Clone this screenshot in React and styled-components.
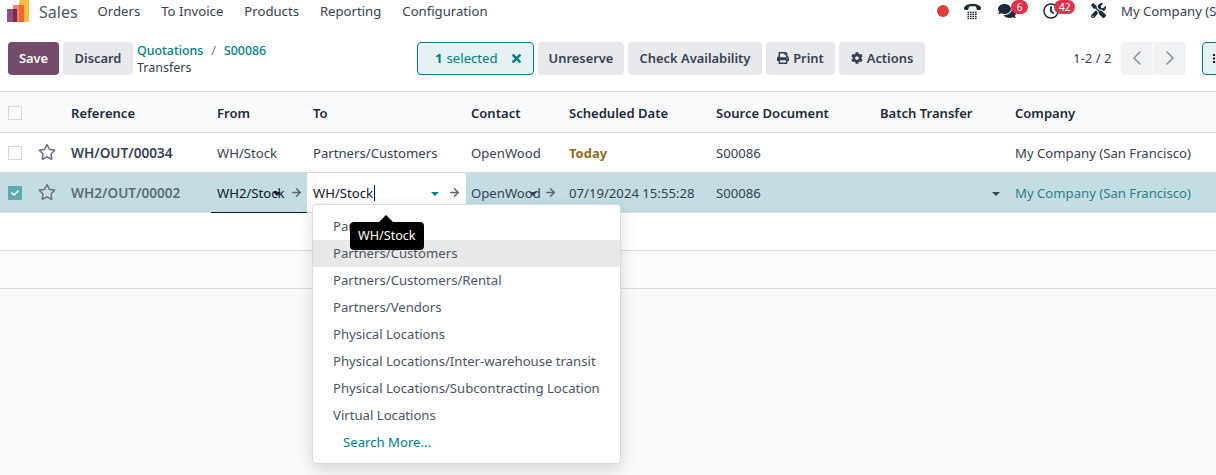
import React from 'react';
import styled, { createGlobalStyle } from 'styled-components';
import {
  FaComments,
  FaRegClock,
  FaTools,
  FaPrint,
  FaCog,
  FaTimes,
  FaRegStar,
  FaCheck,
  FaList,
} from 'react-icons/fa';
import { LuArrowRight, LuChevronLeft, LuChevronRight } from 'react-icons/lu';

const GlobalStyle = createGlobalStyle`
  html, body {
    margin: 0;
    height: 100%;
    overflow: hidden;
    background: #f9fafb;
  }
  body {
    font-family: "Noto Sans", "Open Sans", sans-serif;
    font-size: 13.15px;
    color: #374151;
  }
`;

const COLUMNS = '30px 32px 146px 96px 158px 98px 147px 164px 135px 1fr';

const Page = styled.div`
  position: relative;
  width: 1216px;
  height: 475px;
  overflow: hidden;
`;

const NavBar = styled.nav`
  display: flex;
  align-items: center;
  height: 23px;
  background: #fff;
  overflow: hidden;
`;

const NavLeft = styled.div`
  display: flex;
  align-items: center;
  flex: 0 0 937px;
  padding-left: 7px;
  box-sizing: border-box;
`;

const AppName = styled.span`
  margin: 0 20px 0 10px;
  font-size: 16px;
  color: #4b5563;
`;

const NavLink = styled.span`
  margin: 0 21px 2px 0;
  color: #374151;
  white-space: nowrap;
`;

const NavRight = styled.div`
  display: flex;
  align-items: center;
  flex: none;
  padding-bottom: 2px;
  white-space: nowrap;
`;

const RecordDot = styled.span`
  width: 12px;
  height: 12px;
  border-radius: 50%;
  background: #d9403a;
  margin-right: 13px;
`;

const NavIcon = styled.span`
  position: relative;
  display: flex;
  align-items: center;
  justify-content: center;
  width: ${({ $w }) => $w}px;
  margin-right: ${({ $gap }) => $gap}px;
  color: #1f2a37;
  font-size: ${({ $size }) => $size || 16}px;
`;

const Badge = styled.span`
  position: absolute;
  top: ${({ $top }) => $top}px;
  left: ${({ $left }) => $left}px;
  min-width: 7px;
  padding: 0 5px;
  height: 14px;
  line-height: 14px;
  border-radius: 8px;
  background: #e0324a;
  color: #fff;
  font-size: 10px;
  text-align: center;
`;

const Toolbar = styled.div`
  display: flex;
  align-items: center;
  height: 69px;
  padding: 2px 0 0 8px;
  box-sizing: border-box;
  background: #fff;
  border-bottom: 1px solid #d8dadd;
`;

const ToolLeft = styled.div`
  display: flex;
  align-items: center;
  gap: 4px;
  flex: 0 0 409px;
`;

const ToolCenter = styled.div`
  display: flex;
  align-items: center;
  gap: 4px;
  flex: 0 0 656px;
`;

const ToolRight = styled.div`
  display: flex;
  align-items: center;
  flex: none;
`;

const Button = styled.button`
  display: inline-flex;
  align-items: center;
  justify-content: center;
  gap: 4px;
  box-sizing: border-box;
  width: ${({ $w }) => $w}px;
  height: 33px;
  padding: 0;
  border: 0;
  border-radius: 4px;
  background: ${({ $primary }) => ($primary ? '#714b67' : '#e7e9ed')};
  color: ${({ $primary }) => ($primary ? '#fff' : '#374151')};
  font: 600 12.9px "Noto Sans", sans-serif;
  white-space: nowrap;
`;

const SelectedBox = styled.div`
  display: inline-flex;
  align-items: center;
  box-sizing: border-box;
  width: 117px;
  height: 33px;
  padding-left: 17px;
  border: 1px solid #017e84;
  border-radius: 4px;
  background: #e6f2f3;
  color: #017e84;
  b {
    margin-right: 4px;
  }
  svg {
    margin-left: 12px;
    font-size: 13px;
  }
`;

const Crumbs = styled.div`
  line-height: 17px;
  font-size: 12.5px;
  margin-top: 1px;
`;

const CrumbLinks = styled.div`
  display: flex;
  gap: 8px;
  color: #017e84;
  font-weight: 500;
  font-size: 12.4px;
  span {
    color: #6b7280;
    font-weight: 400;
  }
`;

const PagerText = styled.span`
  width: 40px;
  margin-right: 8px;
  color: #374151;
  white-space: nowrap;
`;

const PagerGroup = styled.div`
  display: flex;
  gap: 1px;
  margin-right: 16px;
`;

const PagerBtn = styled.span`
  display: flex;
  align-items: center;
  justify-content: center;
  width: 32px;
  height: 33px;
  background: #f1f2f4;
  color: #8a9099;
  font-size: 24px;
  border-radius: ${({ $side }) => ($side === 'left' ? '4px 0 0 4px' : '0 4px 4px 0')};
  svg {
    stroke-width: 1.5;
  }
`;

const ViewBtn = styled.span`
  display: flex;
  align-items: center;
  box-sizing: border-box;
  width: 40px;
  height: 33px;
  padding-left: 10px;
  border: 1px solid #017e84;
  border-radius: 4px;
  background: #e6f2f3;
  color: #111827;
  font-size: 11px;
`;

const Row = styled.div`
  display: grid;
  grid-template-columns: ${COLUMNS};
  box-sizing: border-box;
  height: ${({ $h }) => $h}px;
  align-items: center;
  background: ${({ $bg }) => $bg || '#fff'};
  border-bottom: 1px solid #d8dadd;
`;

const HeadCell = styled.div`
  padding: 2px 0 0 9px;
  font-size: 13.05px;
  font-weight: 600;
  color: #1f2937;
  white-space: nowrap;
`;

const HeadCheck = styled.div`
  display: flex;
  padding: 2px 0 0 8px;
`;

const Cell = styled.div`
  position: relative;
  display: flex;
  align-items: center;
  align-self: stretch;
  padding-left: 9px;
  min-width: 0;
  white-space: nowrap;
  color: ${({ $color }) => $color || 'inherit'};
`;

const RefCell = styled(Cell)`
  font-size: 13.6px;
  font-weight: 600;
`;

const DueCell = styled(Cell)`
  font-size: 13px;
  font-weight: 700;
  color: #8f6b1e;
`;

const FromCell = styled(Cell)`
  color: #111827;
  &::after {
    content: '';
    position: absolute;
    left: 3px;
    right: -3px;
    bottom: -1px;
    height: 1px;
    background: #111827;
  }
`;

const ToCell = styled(Cell)`
  padding-left: 0;
  margin: 0 -4px 0 3px;
  background: #fff;
  color: #111827;
`;

const ToValue = styled.span`
  padding-left: 6px;
  width: 61px;
  border-right: 1px solid #111827;
  line-height: 16px;
`;

const Arrow = styled(LuArrowRight)`
  position: absolute;
  right: ${({ $right }) => $right}px;
  width: 13px;
  height: 13px;
  stroke-width: 2.6;
  color: #5f6670;
`;

const Caret = styled.i`
  position: absolute;
  left: ${({ $left }) => $left}px;
  top: 19px;
  border-left: 4px solid transparent;
  border-right: 4px solid transparent;
  border-top: 4px solid ${({ $color }) => $color || '#374151'};
`;

const CheckCell = styled.div`
  display: flex;
  justify-content: flex-start;
  padding-left: 8px;
`;

const CheckBox = styled.span`
  display: flex;
  align-items: center;
  justify-content: center;
  box-sizing: border-box;
  width: 14px;
  height: 14px;
  border: 1px solid ${({ $checked }) => ($checked ? '#5fa9b0' : '#d8dadd')};
  background: ${({ $checked }) => ($checked ? '#5fa9b0' : '#fff')};
  color: #fff;
  font-size: 8px;
`;

const Star = styled(FaRegStar)`
  font-size: 18px;
  color: #6b7280;
  margin: 0 0 1px 8px;
`;

const Dropdown = styled.ul`
  position: absolute;
  left: 312px;
  top: 204px;
  width: 309px;
  box-sizing: border-box;
  margin: 0;
  padding: 8px 0 7px;
  list-style: none;
  background: #fff;
  border: 1px solid #d8dadd;
  border-radius: 4px;
  box-shadow: 0 6px 16px rgba(0, 0, 0, 0.14);
`;

const Option = styled.li`
  height: 27px;
  line-height: 27px;
  padding-left: ${({ $more }) => ($more ? 30 : 20)}px;
  white-space: nowrap;
  background: ${({ $active }) => ($active ? '#e9e9e9' : 'transparent')};
  color: ${({ $more }) => ($more ? '#017e84' : '#4b5563')};
`;

const Tooltip = styled.div`
  position: absolute;
  left: 350px;
  top: 222px;
  padding: 0 8px;
  height: 28px;
  line-height: 28px;
  background: #000;
  color: #fff;
  font-size: 12.6px;
  border-radius: 4px;
  &::before {
    content: '';
    position: absolute;
    left: 29px;
    top: -7px;
    border-left: 7px solid transparent;
    border-right: 7px solid transparent;
    border-bottom: 7px solid #000;
  }
`;

const LogoMark = () => (
  <svg width="22" height="23" viewBox="0 0 22 23">
    <rect x="0" y="9" width="10" height="13" fill="#8f4f7f" />
    <rect x="6" y="5" width="11" height="17" fill="#f0806f" />
    <rect x="6" y="9" width="4" height="13" fill="#7a2b4f" />
    <path d="M12 2a2 2 0 0 1 2-2h8v22H12z" fill="#fbb945" />
    <rect x="12" y="5" width="5" height="17" fill="#f5662a" />
  </svg>
);

const PhoneIcon = () => (
  <svg width="19" height="19" viewBox="0 0 19 19" fill="currentColor">
    <path d="M1 8V6.5C4 1.5 15 1.5 18 6.5V8l-1 1h-3l-1-3.2c-2.200-.6-5-.6-7 0L5 9H2z" />
    {[4.5, 7, 9.500, 12].flatMap((x) =>
      [10.500, 12.600, 14.700, 16.800].map((y) => (
        <rect key={`${x}-${y}`} x={x} y={y} width="1.6" height="1.4" />
      )),
    )}
  </svg>
);

const MENU = ['Orders', 'To Invoice', 'Products', 'Reporting', 'Configuration'];
const HEADERS = [
  'Reference',
  'From',
  'To',
  'Contact',
  'Scheduled Date',
  'Source Document',
  'Batch Transfer',
  'Company',
];
const LOCATIONS = [
  'Partners',
  'Partners/Customers',
  'Partners/Customers/Rental',
  'Partners/Vendors',
  'Physical Locations',
  'Physical Locations/Inter-warehouse transit',
  'Physical Locations/Subcontracting Location',
  'Virtual Locations',
];

const App = () => {
  return (
    <Page>
      <GlobalStyle />
      <NavBar>
        <NavLeft>
          <LogoMark />
          <AppName>Sales</AppName>
          {MENU.map((item) => (
            <NavLink key={item}>{item}</NavLink>
          ))}
        </NavLeft>
        <NavRight>
          <RecordDot />
          <NavIcon $w={20} $gap={15} $size={19}>
            <PhoneIcon />
          </NavIcon>
          <NavIcon $w={20} $gap={25} $size={18}>
            <FaComments />
            <Badge $left={14} $top={-2}>6</Badge>
          </NavIcon>
          <NavIcon $w={18} $gap={30} $size={16}>
            <FaRegClock />
            <Badge $left={12} $top={-3}>42</Badge>
          </NavIcon>
          <NavIcon $w={16} $gap={15} $size={15}>
            <FaTools />
          </NavIcon>
          <span>My Company (San Francisco)</span>
        </NavRight>
      </NavBar>

      <Toolbar>
        <ToolLeft>
          <Button $primary $w={51}>Save</Button>
          <Button $w={70}>Discard</Button>
          <Crumbs>
            <CrumbLinks>
              Quotations <span>/</span> S00086
            </CrumbLinks>
            Transfers
          </Crumbs>
        </ToolLeft>
        <ToolCenter>
          <SelectedBox>
            <b>1</b> selected <FaTimes />
          </SelectedBox>
          <Button $w={86}>Unreserve</Button>
          <Button $w={134}>Check Availability</Button>
          <Button $w={69}>
            <FaPrint size={12} /> Print
          </Button>
          <Button $w={86}>
            <FaCog size={12} /> Actions
          </Button>
        </ToolCenter>
        <ToolRight>
          <PagerText>1-2 / 2</PagerText>
          <PagerGroup>
            <PagerBtn $side="left">
              <LuChevronLeft />
            </PagerBtn>
            <PagerBtn $side="right">
              <LuChevronRight />
            </PagerBtn>
          </PagerGroup>
          <ViewBtn>
            <FaList />
          </ViewBtn>
        </ToolRight>
      </Toolbar>

      <Row $h={41} $bg="#f9fafb">
        <HeadCheck>
          <CheckBox />
        </HeadCheck>
        <span />
        {HEADERS.map((h) => (
          <HeadCell key={h}>{h}</HeadCell>
        ))}
      </Row>

      <Row $h={40}>
        <CheckCell>
          <CheckBox />
        </CheckCell>
        <Star />
        <RefCell>WH/OUT/00034</RefCell>
        <Cell>WH/Stock</Cell>
        <Cell>Partners/Customers</Cell>
        <Cell>OpenWood</Cell>
        <DueCell>Today</DueCell>
        <Cell>S00086</Cell>
        <Cell />
        <Cell>My Company (San Francisco)</Cell>
      </Row>

      <Row $h={40} $bg="#c4dde2">
        <CheckCell>
          <CheckBox $checked>
            <FaCheck />
          </CheckBox>
        </CheckCell>
        <Star />
        <RefCell $color="#5f6b78">WH2/OUT/00002</RefCell>
        <FromCell>
          WH2/Stock
          <Caret $left={65} $color="#111827" />
          <Arrow $right={1} />
        </FromCell>
        <ToCell>
          <ToValue>WH/Stock</ToValue>
          <Caret $left={124} $color="#017e84" />
          <Arrow $right={5} />
        </ToCell>
        <Cell>
          OpenWood
          <Caret $left={67} />
          <Arrow $right={3} />
        </Cell>
        <Cell>07/19/2024 15:55:28</Cell>
        <Cell>S00086</Cell>
        <Cell>
          <Caret $left={121} />
        </Cell>
        <Cell $color="#2f7f86">My Company (San Francisco)</Cell>
      </Row>

      <Row $h={38} />
      <Row $h={38} $bg="#fbfbfb" />

      <Dropdown>
        {LOCATIONS.map((loc) => (
          <Option key={loc} $active={loc === 'Partners/Customers'}>
            {loc}
          </Option>
        ))}
        <Option $more>Search More...</Option>
      </Dropdown>
      <Tooltip>WH/Stock</Tooltip>
    </Page>
  );
};

export default App;
